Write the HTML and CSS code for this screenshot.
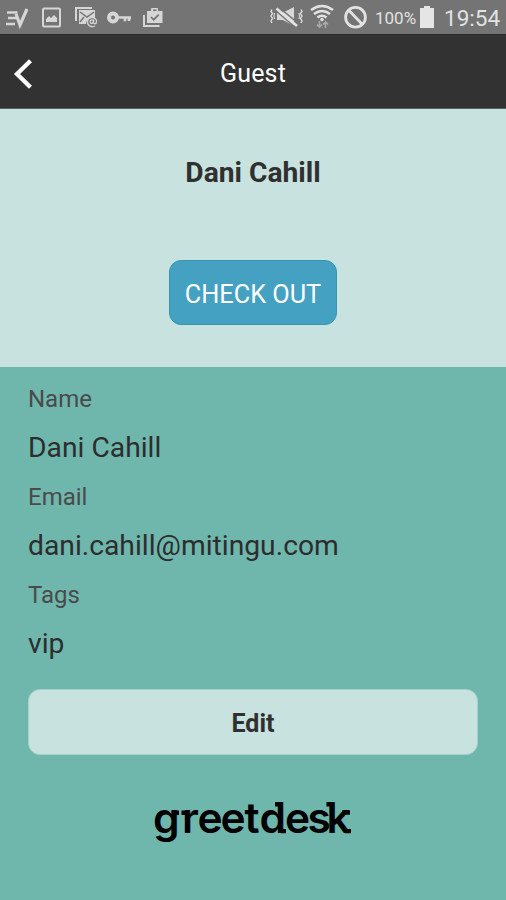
FILE: index.html
```html
<!DOCTYPE html>
<html lang="en">
<head>
<meta charset="utf-8">
<title>Guest</title>
<link rel="stylesheet" href="styles.css">
</head>
<body>
<div class="status">
  <svg width="170" height="34" viewBox="0 0 170 34" fill="none" stroke="#d6d6d6">
    <path d="M7 12.500h10.500M8 18h9M6 24h9" stroke-width="2.600"/>
    <path d="M16 14l4 11L27 9" stroke-width="3.200"/>
    <rect x="43" y="8.500" width="17" height="18" rx="1" stroke-width="2"/>
    <path d="M46 22v-3l3-3 2 2 3-3 3 3v4z" fill="#d6d6d6" stroke="none"/>
    <path d="M76 21V8h16" stroke-width="2"/>
    <path d="M79 10h16v8c-5-1-9 2-9 6h-7z" fill="#d6d6d6" stroke="none"/>
    <path d="M80 12l7 5 7-5M80 22l4-5" stroke="#747474" stroke-width="1.500"/>
    <path d="M95 26c-3.500 1.500-7.500 0-7.500-4 0-5.500 9-6 9-.5 0 3-3 3-3 .5v-2.500m0 2.500a1.700 1.700 0 1 1-.2-1.300" stroke-width="1.300"/>
    <circle cx="113" cy="17.500" r="4" stroke-width="4"/>
    <path d="M118 17.500h13M125 18v3.200M129 18v3" stroke-width="2.700"/>
    <path d="M144 15v11h15.500" stroke-width="2"/>
    <path d="M147 11h4V9q0-1 1-1h5q1 0 1 1v2h4.500v12H147zm6 0h3.500V9.500H153z" fill="#d6d6d6" fill-rule="evenodd" stroke="none"/>
    <path d="M151 17l2.700 2.700 5-5" stroke="#747474" stroke-width="1.700"/>
  </svg>
  <div class="status-right">
    <svg width="104" height="34" viewBox="268 0 104 34" fill="none" stroke="#e2e2e2">
      <path d="M272 9.500l-1 2 1.500 2-1.500 2.500 1.500 2.500-1.500 2.500 1 2M301 9.500l1 2-1.500 2 1.500 2.500-1.500 2.500 1.500 2.500-1 2" stroke-width="1.300"/>
      <path d="M274.500 13l-.5 3 .5 3M299 13l.5 3-.5 3" stroke-width="1"/>
      <path d="M277 12.500h6l11-5.500v19l-11-6h-6z" fill="#d8d8d8" stroke="none"/>
      <path d="M278.500 7l20 16.500M275.500 10.500l20 17" stroke="#747474" stroke-width="1.500"/>
      <path d="M276.500 8.500l20.500 17.500" stroke-width="2.600"/>
      <path d="M311 10q11-8 22 0M314 14q8-6 16 0M317.500 17.500q4.500-3.500 9 0" stroke-width="2.600"/>
      <circle cx="322" cy="19.500" r="1.700" fill="#e2e2e2" stroke="none"/>
      <path d="M319.500 21v6m-2.500-2.500 2.500 2.500 2.500-2.500M325.500 28v-6m-2.500 2.500 2.500-2.500 2.500 2.500" stroke="#aaa" stroke-width="1.700"/>
      <circle cx="355.500" cy="17.200" r="9.900" stroke-width="2.800"/>
      <path d="M349 10.500l13 13.500" stroke-width="2.800"/>
    </svg>
    <span class="percent">100%</span>
    <svg class="battery" width="14" height="22" viewBox="0 0 14 22"><path d="M4 0h6v2h4v20H0V2h4z" fill="#e5e5e5"/></svg>
    <span class="clock">19:54</span>
  </div>
</div>
<header class="bar">
  <svg class="back" width="22" height="32" viewBox="0 0 22 32"><path d="M18.500 2.800L5 16l13.500 13.200" fill="none" stroke="#fff" stroke-width="4.300"/></svg>
  <h1>Guest</h1>
</header>
<section class="hero">
  <h2>Dani Cahill</h2>
  <button class="checkout">CHECK OUT</button>
</section>
<main class="details">
  <dl>
    <dt>Name</dt><dd>Dani Cahill</dd>
    <dt>Email</dt><dd>dani.cahill@mitingu.com</dd>
    <dt>Tags</dt><dd>vip</dd>
  </dl>
  <button class="edit">Edit</button>
  <svg class="logo" width="206" height="60" viewBox="150 792 206 60">
    <text y="833.300" x="153 182 197.500 220.500 244.500 259.500 285 307.500 326.500">greetdesk</text>
    <path d="M173 810.500h6v4.500h-6zM181.500 810.500h5v4.500h-5zM275 802h7v4.500h-7zM281 829h5v4.300h-5zM326.500 802h6v4.500h-6zM345 829h6v4.300h-6zM342 810.500h8v4.300h-8z"/>
  </svg>
</main>
</body>
</html>
```
FILE: styles.css
```css
* { box-sizing: border-box; }
body { margin: 0; width: 506px; height: 900px; display: flex; flex-direction: column; overflow: hidden; font-family: Roboto, sans-serif; color: #303030; background: #6fb7ad; }
h1, h2, dl, dd { margin: 0; }
button { font-family: inherit; padding: 0; }
svg { display: block; flex: none; }
.status { height: 34px; display: flex; justify-content: space-between; background: #747474; color: #e2e2e2; }
.status-right { display: flex; align-items: center; width: 238px; white-space: nowrap; }
.percent { width: 45px; margin-left: 3px; font-size: 17px; line-height: 34px; padding-top: 2px; }
.clock { margin-left: 10px; font-size: 22.500px; line-height: 34px; padding-top: 2px; }
.bar { height: 75px; display: grid; grid-template-columns: 40px 1fr 40px; align-items: center; background: #323232; border-top: 1px solid #2a2a2a; border-bottom: 1px solid #5d6261; color: #fff; }
.back { margin: 4px 0 0 12px; }
h1 { font-size: 25px; font-weight: 400; text-align: center; line-height: 30px; padding-top: 4px; letter-spacing: .2px; }
.hero { height: 258px; display: flex; flex-direction: column; align-items: center; padding-top: 47px; background: #c8e3df; }
h2 { font-size: 28.200px; line-height: 34px; font-weight: 700; color: #303030; }
.checkout { margin-top: 70px; width: 168px; height: 65px; border: 1.500px solid #3795b0; border-radius: 12px; background: #44a1c1; color: #fff; font-size: 25.300px; padding-top: 4px; }
.details { flex: 1; display: flex; flex-direction: column; align-items: center; padding: 7px 28px 0; }
dl { width: 100%; }
dt, dd { height: 49px; line-height: 49px; }
dt { font-size: 24px; line-height: 51px; color: #4a4a4a; }
dd { font-size: 28.250px; line-height: 50px; color: #2d2d2d; }
.edit { width: 450px; height: 66px; margin-top: 21px; border: 1px solid #a5d2cb; border-radius: 12px; background: #c8e3df; color: #303030; font-size: 25px; font-weight: 700; padding-top: 2px; }
.logo { margin-top: 37px; fill: #000; }
.logo text { font: 600 42.500px Inter, sans-serif; }
```
